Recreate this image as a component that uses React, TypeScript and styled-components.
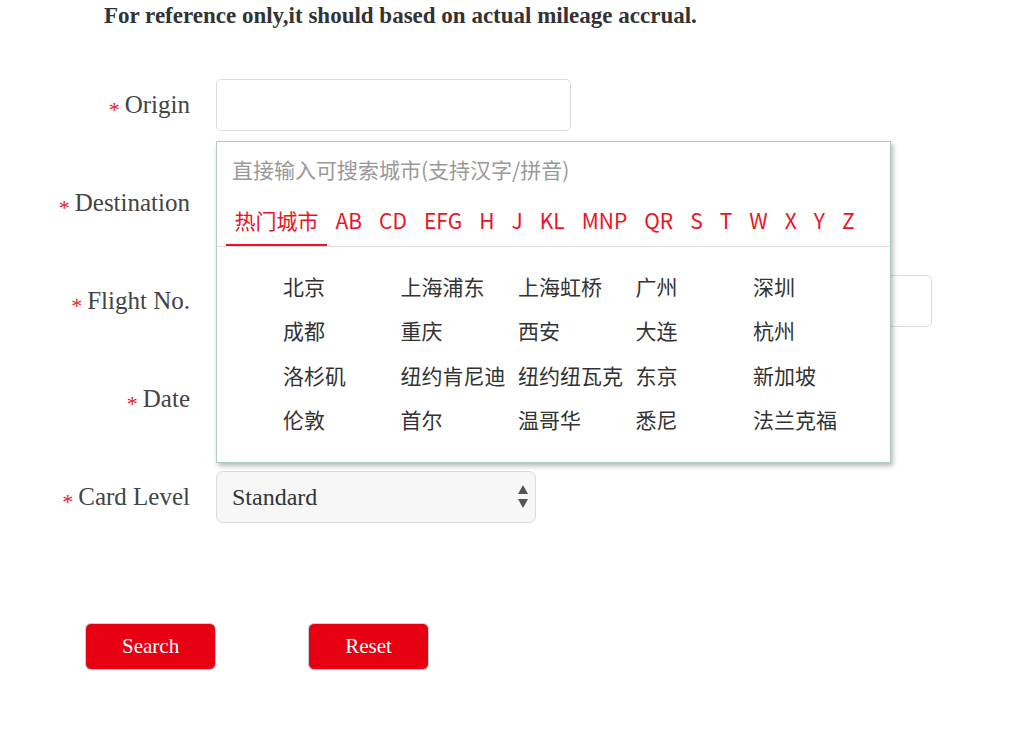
import styled, { createGlobalStyle } from "styled-components";

const hotCities = [
  "北京", "上海浦东", "上海虹桥", "广州", "深圳",
  "成都", "重庆", "西安", "大连", "杭州",
  "洛杉矶", "纽约肯尼迪", "纽约纽瓦克", "东京", "新加坡",
  "伦敦", "首尔", "温哥华", "悉尼", "法兰克福",
];

const tabs = ["热门城市", "AB", "CD", "EFG", "H", "J", "KL", "MNP", "QR", "S", "T", "W", "X", "Y", "Z"];

const CityPicker = () => (
  <Popup>
    <SearchInput placeholder="直接输入可搜索城市(支持汉字/拼音)" />
    <TabBar>
      {tabs.map((t, i) => (
        <Tab key={t} $active={i === 0}>
          {t}
        </Tab>
      ))}
    </TabBar>
    <CityGrid>
      {hotCities.map((c) => (
        <City key={c}>{c}</City>
      ))}
    </CityGrid>
  </Popup>
);

const App = () => {
  return (
    <Page>
      <GlobalStyle />
      <Notice>For reference only,it should based on actual mileage accrual.</Notice>
      <Form>
        <Row>
          <Label>
            <Star>*</Star>Origin
          </Label>
          <Field>
            <Input $width={355} />
            <CityPicker />
          </Field>
        </Row>
        <Row>
          <Label>
            <Star>*</Star>Destination
          </Label>
          <Field>
            <Input $width={355} />
          </Field>
        </Row>
        <Row>
          <Label>
            <Star>*</Star>Flight No.
          </Label>
          <Field>
            <Input $width={716} />
          </Field>
        </Row>
        <Row>
          <Label>
            <Star>*</Star>Date
          </Label>
          <Field>
            <Input $width={355} />
          </Field>
        </Row>
        <Row>
          <Label>
            <Star>*</Star>Card Level
          </Label>
          <Field>
            <SelectWrap>
              <Select defaultValue="Standard">
                <option>Standard</option>
                <option>Silver</option>
                <option>Gold</option>
                <option>Platinum</option>
              </Select>
              <Arrows width="10" height="24" viewBox="0 0 10 24">
                <path d="M5 0 L10 9 L0 9 Z" fill="#555" />
                <path d="M0 14 L10 14 L5 23 Z" fill="#555" />
              </Arrows>
            </SelectWrap>
          </Field>
        </Row>
      </Form>
      <Buttons>
        <RedButton type="button">Search</RedButton>
        <RedButton type="button">Reset</RedButton>
      </Buttons>
    </Page>
  );
};

export default App;

// STYLED COMPONENTS

const GlobalStyle = createGlobalStyle`
  body {
    margin: 0;
    background: #fff;
    font-family: "Liberation Serif", "Times New Roman", serif;
  }
`;

const Page = styled.div`
  width: 1028px;
  height: 732px;
  overflow: hidden;
`;

const Notice = styled.h3`
  margin: 0;
  padding: 3px 0 0 104px;
  font-size: 23px;
  line-height: 26px;
  font-weight: bold;
  color: #333;
`;

const Form = styled.div`
  display: flex;
  flex-direction: column;
  gap: 46px;
  margin-top: 50px;
`;

const Row = styled.div`
  display: grid;
  grid-template-columns: 190px 1fr;
  column-gap: 26px;
  align-items: center;
  height: 52px;
`;

const Label = styled.label`
  text-align: right;
  font-size: 25px;
  color: #444;
  white-space: nowrap;
`;

const Star = styled.span`
  color: #ee1122;
  font-size: 22px;
  margin-right: 5px;
  position: relative;
  top: 4px;
`;

const Field = styled.div`
  position: relative;
  height: 52px;
`;

const Input = styled.input<{ $width: number }>`
  box-sizing: border-box;
  width: ${(p) => p.$width}px;
  height: 52px;
  border: 1px solid #dcdcdc;
  border-radius: 5px;
  padding: 0 15px;
  font-size: 22px;
  font-family: "Liberation Serif", serif;
  outline: none;
`;

const Popup = styled.div`
  position: absolute;
  top: calc(100% + 10px);
  left: 0;
  z-index: 10;
  box-sizing: border-box;
  width: 675px;
  background: #fff;
  border: 1px solid #aecbbd;
  box-shadow: 2px 3px 5px rgba(0, 0, 0, 0.28);
  font-family: "Noto Sans CJK SC", "Noto Sans", sans-serif;
`;

const SearchInput = styled.input`
  display: block;
  box-sizing: border-box;
  width: 100%;
  height: 54px;
  border: none;
  outline: none;
  padding: 0 15px;
  font-size: 21px;
  font-family: "Noto Sans CJK SC", "Noto Sans", sans-serif;
  color: #333;

  &::placeholder {
    color: #999;
  }
`;

const TabBar = styled.div`
  display: flex;
  padding: 0 9px;
  border-bottom: 1px solid #ddd;
`;

const Tab = styled.span<{ $active?: boolean }>`
  box-sizing: border-box;
  height: 50px;
  line-height: 48px;
  padding: 0 8.5px;
  font-size: 21px;
  color: #ee1122;
  border-bottom: 2px solid ${(p) => (p.$active ? "#ee1122" : "transparent")};
  cursor: pointer;
`;

const CityGrid = styled.div`
  display: grid;
  grid-template-columns: repeat(5, 117.5px);
  grid-auto-rows: 44.3px;
  align-items: center;
  padding: 17px 0 21px 66px;
`;

const City = styled.span`
  font-size: 21px;
  color: #333;
  white-space: nowrap;
  cursor: pointer;
`;

const SelectWrap = styled.div`
  position: relative;
  width: 320px;
  height: 52px;
`;

const Select = styled.select`
  box-sizing: border-box;
  width: 100%;
  height: 100%;
  appearance: none;
  background: #f7f7f7;
  border: 1px solid #dcdcdc;
  border-radius: 7px;
  padding: 0 15px;
  font-size: 24px;
  font-family: "Liberation Serif", serif;
  color: #333;
  outline: none;
`;

const Arrows = styled.svg`
  position: absolute;
  right: 8px;
  top: 14px;
  pointer-events: none;
`;

const Buttons = styled.div`
  display: flex;
  gap: 92px;
  margin: 100px 0 0 85px;
`;

const RedButton = styled.button`
  height: 47px;
  padding: 0 36px;
  background: #e60012;
  color: #fff;
  border: 1px solid #c3d3d3;
  border-radius: 6px;
  font-size: 21px;
  font-family: "Liberation Serif", serif;
  cursor: pointer;
`;
